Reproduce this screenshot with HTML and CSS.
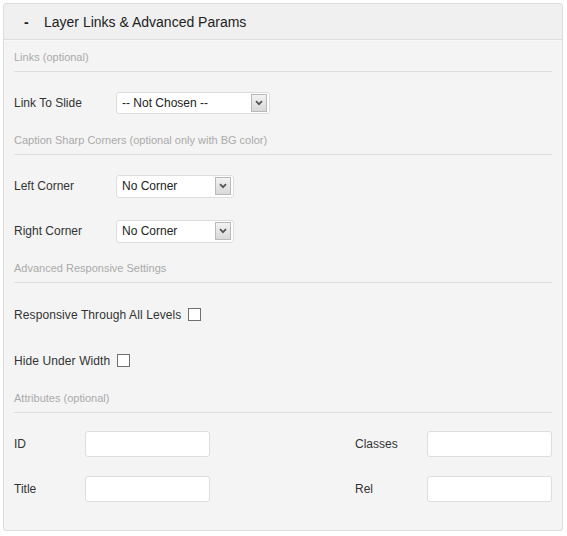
FILE: index.html
```html
<!DOCTYPE html>
<html>
<head>
<meta charset="utf-8">
<link rel="stylesheet" href="styles.css">
</head>
<body>
<div class="panel">
  <div class="panel-head"><span class="toggle">-</span><span class="panel-title">Layer Links &amp; Advanced Params</span></div>
  <div class="panel-body">
    <div class="section-title first">Links (optional)</div>
    <div class="row">
      <label class="label">Link To Slide</label>
      <div class="select wide"><span>-- Not Chosen --</span><span class="arrow"><svg width="8" height="6" viewBox="0 0 8 6"><path d="M1 1.2 L4 4.2 L7 1.2" fill="none" stroke="#555" stroke-width="1.8"/></svg></span></div>
    </div>

    <div class="section-title">Caption Sharp Corners (optional only with BG color)</div>
    <div class="row">
      <label class="label">Left Corner</label>
      <div class="select narrow"><span>No Corner</span><span class="arrow"><svg width="8" height="6" viewBox="0 0 8 6"><path d="M1 1.2 L4 4.2 L7 1.2" fill="none" stroke="#555" stroke-width="1.8"/></svg></span></div>
    </div>
    <div class="row">
      <label class="label">Right Corner</label>
      <div class="select narrow"><span>No Corner</span><span class="arrow"><svg width="8" height="6" viewBox="0 0 8 6"><path d="M1 1.2 L4 4.2 L7 1.2" fill="none" stroke="#555" stroke-width="1.8"/></svg></span></div>
    </div>

    <div class="section-title">Advanced Responsive Settings</div>
    <div class="row check-row">
      <label class="inline-label">Responsive Through All Levels</label>
      <input type="checkbox" class="check">
    </div>
    <div class="row check-row">
      <label class="inline-label">Hide Under Width</label>
      <input type="checkbox" class="check">
    </div>

    <div class="section-title">Attributes (optional)</div>
    <div class="attr-grid">
      <label class="label">ID</label>
      <input type="text" class="text-input">
      <span></span>
      <label class="label">Classes</label>
      <input type="text" class="text-input">
      <label class="label">Title</label>
      <input type="text" class="text-input">
      <span></span>
      <label class="label">Rel</label>
      <input type="text" class="text-input">
    </div>
  </div>
</div>
</body>
</html>
```

FILE: styles.css
```css
html, body {
  margin: 0;
  padding: 0;
  background: #ffffff;
}
body {
  font-family: "Liberation Sans", Arial, sans-serif;
  font-size: 12px;
  color: #333333;
}
.panel {
  margin: 3px 0 0 3px;
  width: 560px;
  box-sizing: border-box;
  border: 1px solid #dcdcdc;
  border-radius: 3px;
  background: #f4f4f4;
}
.panel-head {
  height: 35px;
  display: flex;
  align-items: center;
  background: #f0f0f0;
  border-bottom: 1px solid #dddddd;
  box-shadow: 0 1px 0 #f9f9f9;
  font-size: 14px;
  color: #222222;
  border-radius: 3px 3px 0 0;
}
.toggle {
  width: 20px;
  margin-left: 20px;
  font-weight: bold;
}
.panel-body {
  padding: 0 10px 28px 10px;
  display: flex;
  flex-direction: column;
}
.section-title {
  font-size: 11px;
  line-height: 14px;
  color: #aaaaaa;
  padding: 10px 0 7px 0;
  margin-top: 9px;
  border-bottom: 1px solid #dddddd;
}
.section-title.first {
  margin-top: 0;
}
.row {
  display: flex;
  align-items: center;
  height: 22px;
  margin-top: 20px;
}
.row + .row {
  margin-top: 23px;
}
.check-row {
  height: 23px;
}
.label {
  width: 102px;
  flex-shrink: 0;
}
.inline-label {
  margin-right: 7px;
  letter-spacing: 0.1px;
}
.select {
  height: 22px;
  box-sizing: border-box;
  background: #ffffff;
  border: 1px solid #dddddd;
  border-radius: 3px;
  display: flex;
  align-items: center;
  justify-content: space-between;
  padding: 0 2px 0 5px;
  color: #222222;
}
.select.wide {
  width: 154px;
}
.select.narrow {
  width: 118px;
  height: 23px;
}
.arrow {
  width: 16px;
  height: 18px;
  box-sizing: border-box;
  border: 1px solid #b9b9b9;
  background: linear-gradient(#f2f2f2, #d9d9d9);
  display: flex;
  align-items: center;
  justify-content: center;
}
.check {
  -webkit-appearance: none;
  appearance: none;
  width: 13px;
  height: 13px;
  margin: 0;
  box-sizing: border-box;
  border: 1px solid #707070;
  background: #ffffff;
}
.attr-grid {
  display: grid;
  grid-template-columns: 71px 125px 1fr 72px 125px;
  grid-auto-rows: 26px;
  row-gap: 19px;
  align-items: center;
  margin-top: 18px;
}
.attr-grid .label {
  width: auto;
}
.text-input {
  height: 26px;
  box-sizing: border-box;
  width: 125px;
  margin: 0;
  border: 1px solid #dddddd;
  border-radius: 3px;
  background: #ffffff;
}
```
